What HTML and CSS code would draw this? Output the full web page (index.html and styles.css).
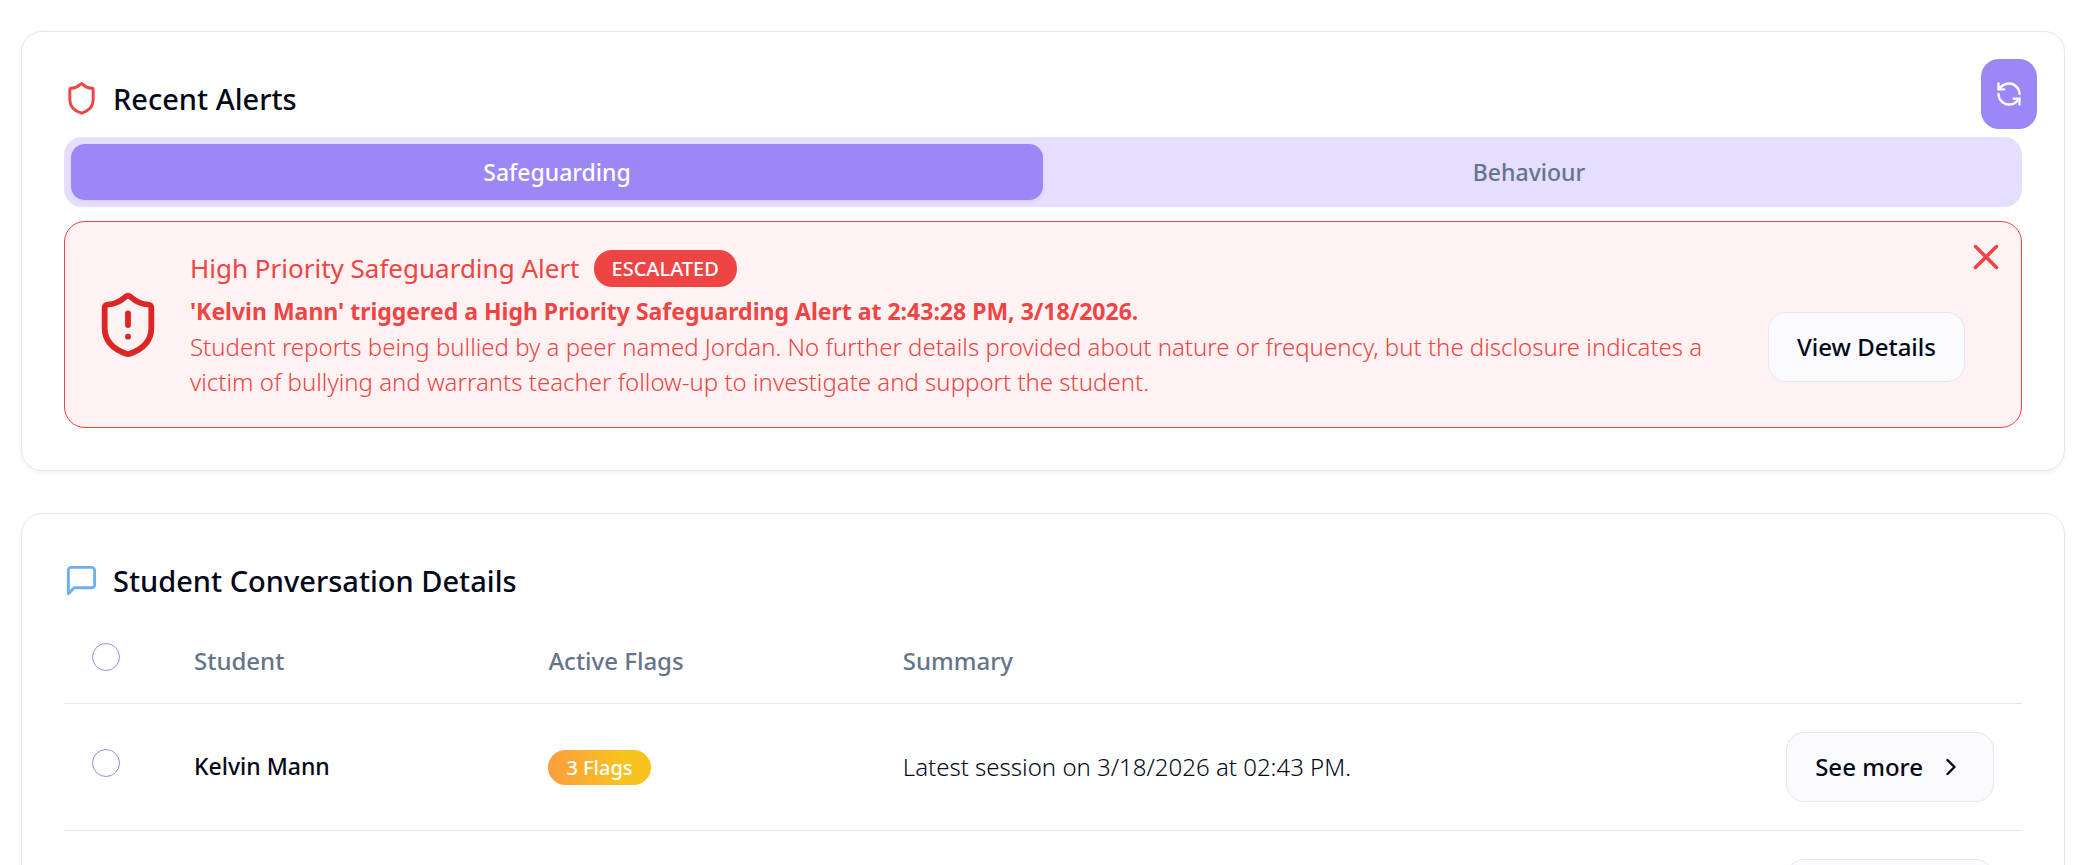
FILE: index.html
```html
<!DOCTYPE html>
<html lang="en">
<head>
    <meta charset="UTF-8">
    <meta name="viewport" content="width=device-width, initial-scale=1.0">
    <title>Recent Alerts</title>
    <link rel="stylesheet" href="styles.css">
</head>
<body>
    <main class="page">
        <section class="card">
            <button class="refresh" aria-label="Refresh alerts">
                <svg class="icon" viewBox="0 0 24 24"><path d="M21 12a9 9 0 0 0-9-9 9.75 9.75 0 0 0-6.74 2.74L3 8"/><path d="M3 3v5h5"/><path d="M3 12a9 9 0 0 0 9 9 9.75 9.75 0 0 0 6.74-2.74L21 16"/><path d="M16 16h5v5"/></svg>
            </button>
            <h2 class="card-title">
                <svg class="icon icon-title red" viewBox="0 0 24 24"><path d="M20 13c0 5-3.5 7.5-7.66 8.95a1 1 0 0 1-.67-.01C7.5 20.5 4 18 4 13V6a1 1 0 0 1 1-1c2 0 4.5-1.2 6.24-2.72a1.17 1.17 0 0 1 1.52 0C14.51 3.81 17 5 19 5a1 1 0 0 1 1 1z"/></svg>
                Recent Alerts
            </h2>
            <div class="tabs" role="tablist">
                <button class="tab active" role="tab" aria-selected="true">Safeguarding</button>
                <button class="tab" role="tab" aria-selected="false">Behaviour</button>
            </div>
            <div class="alert">
                <svg class="icon icon-alert" viewBox="0 0 24 24"><path d="M20 13c0 5-3.5 7.5-7.66 8.95a1 1 0 0 1-.67-.01C7.5 20.5 4 18 4 13V6a1 1 0 0 1 1-1c2 0 4.5-1.2 6.24-2.72a1.17 1.17 0 0 1 1.52 0C14.51 3.81 17 5 19 5a1 1 0 0 1 1 1z"/><path d="M12 8v4"/><path d="M12 16h.01"/></svg>
                <div class="alert-body">
                    <div class="alert-head">
                        <h3 class="alert-title">High Priority Safeguarding Alert</h3>
                        <span class="badge escalated">ESCALATED</span>
                    </div>
                    <div class="alert-row">
                        <div class="alert-text">
                            <p class="strong">'Kelvin Mann' triggered a High Priority Safeguarding Alert at 2:43:28 PM, 3/18/2026.</p>
                            <p class="light">Student reports being bullied by a peer named Jordan. No further details provided about nature or frequency, but the disclosure indicates a victim of bullying and warrants teacher follow-up to investigate and support the student.</p>
                        </div>
                        <button class="btn">View Details</button>
                    </div>
                </div>
                <button class="close" aria-label="Dismiss alert">
                    <svg class="icon" viewBox="0 0 24 24"><path d="M18 6 6 18"/><path d="m6 6 12 12"/></svg>
                </button>
            </div>
        </section>

        <section class="card">
            <h2 class="card-title">
                <svg class="icon icon-title blue" viewBox="0 0 24 24"><path d="M21 15a2 2 0 0 1-2 2H7l-4 4V5a2 2 0 0 1 2-2h14a2 2 0 0 1 2 2z"/></svg>
                Student Conversation Details
            </h2>
            <table class="students">
                <colgroup>
                    <col class="col-check">
                    <col class="col-name">
                    <col class="col-flags">
                    <col>
                    <col class="col-action">
                </colgroup>
                <thead>
                    <tr>
                        <th><input class="check" type="checkbox" aria-label="Select all students"></th>
                        <th>Student</th>
                        <th>Active Flags</th>
                        <th>Summary</th>
                        <th></th>
                    </tr>
                </thead>
                <tbody>
                    <tr>
                        <td><input class="check" type="checkbox" aria-label="Select Kelvin Mann"></td>
                        <td class="name">Kelvin Mann</td>
                        <td><span class="badge flags">3 Flags</span></td>
                        <td class="light">Latest session on 3/18/2026 at 02:43 PM.</td>
                        <td class="action">
                            <button class="btn">See more <svg class="icon" viewBox="0 0 24 24"><path d="m9 18 6-6-6-6"/></svg></button>
                        </td>
                    </tr>
                    <tr>
                        <td><input class="check" type="checkbox" aria-label="Select student"></td>
                        <td class="name"></td>
                        <td></td>
                        <td class="light"></td>
                        <td class="action">
                            <button class="btn">See more <svg class="icon" viewBox="0 0 24 24"><path d="m9 18 6-6-6-6"/></svg></button>
                        </td>
                    </tr>
                </tbody>
            </table>
        </section>
    </main>
</body>
</html>
```

FILE: styles.css
```css
* { box-sizing: border-box; margin: 0; padding: 0; }
body { font-family: "Noto Sans", "Open Sans", sans-serif; font-size: 23px; line-height: 35px; color: #020817; background: #fff; }
button { font: inherit; color: inherit; border: none; background: none; cursor: pointer; }

.page { display: flex; flex-direction: column; gap: 42px; height: 100vh; padding: 31px 21px 0; overflow: hidden; }

.card { position: relative; flex-shrink: 0; padding: 42px; border: 1px solid #e2e8f0; border-radius: 21px; background: #fff; box-shadow: 0 2px 4px rgba(0, 0, 0, 0.05); }
.card-title { display: flex; align-items: center; gap: 14px; margin-bottom: 14px; font-size: 29px; line-height: 49px; font-weight: 500; }

.icon { flex-shrink: 0; width: 28px; height: 28px; fill: none; stroke: currentColor; stroke-width: 2; stroke-linecap: round; stroke-linejoin: round; }
.icon-title { width: 35px; height: 35px; }
.icon-alert { width: 70px; height: 70px; color: #dc2626; }
.red { color: #ef4444; }
.blue { color: #6eb0f2; }

.refresh { position: absolute; top: 27px; right: 27px; display: flex; align-items: center; justify-content: center; width: 56px; height: 70px; border-radius: 18px; background: #9b87f5; color: #fff; }

.tabs { display: flex; padding: 7px; border-radius: 18px; background: #e5deff; }
.tab { flex: 1; height: 56px; border-radius: 14px; font-weight: 500; color: #64748b; }
.tab.active { background: #9b87f5; color: #fff; box-shadow: 0 2px 4px rgba(0, 0, 0, 0.05); }

.alert { position: relative; display: flex; align-items: center; gap: 27px; margin-top: 14px; padding: 28px; border: 1px solid #ef4444; border-radius: 21px; background: #fef2f2; color: #ef4444; }
.alert-body { flex: 1; }
.alert-head { display: flex; align-items: center; gap: 14px; margin-bottom: 7px; }
.alert-title { font-size: 26px; line-height: 37px; font-weight: 400; }
.alert-row { display: flex; align-items: center; gap: 28px; padding-right: 28px; }
.alert-text { flex: 1; }
.light { font-size: 24px; font-weight: 300; }
.strong { font-weight: 700; }
.close { position: absolute; top: 14px; right: 14px; width: 42px; height: 42px; }
.close .icon { display: block; width: 42px; height: 42px; }

.badge { display: inline-block; padding: 0 18px; border-radius: 18px; font-size: 20px; line-height: 37px; font-weight: 500; color: #fff; }
.escalated { background: #ef4444; }
.flags { line-height: 35px; background: linear-gradient(to right, #fb9e3e, #f9c31f 75%); vertical-align: middle; }

.btn { display: inline-flex; align-items: center; gap: 14px; height: 70px; padding: 0 28px; border: 1px solid #e2e8f0; border-radius: 18px; background: #fafaff; font-size: 24px; font-weight: 500; color: #020817; white-space: nowrap; vertical-align: middle; }

.students { width: 100%; table-layout: fixed; border-collapse: collapse; }
.students tr { border-bottom: 1px solid #e2e8f0; }
.students th { height: 84px; padding: 0 28px; text-align: left; font-size: 24px; font-weight: 500; color: #64748b; }
.students td { padding: 28px; }
.col-check { width: 102px; }
.col-name, .col-flags { width: 18.1%; }
.col-action { width: 280px; }
.name { font-weight: 500; }
.students .action { text-align: right; }
.check { display: block; width: 28px; height: 28px; margin-bottom: 7px; appearance: none; border: 1px solid #9b87f5; border-radius: 50%; }
```
